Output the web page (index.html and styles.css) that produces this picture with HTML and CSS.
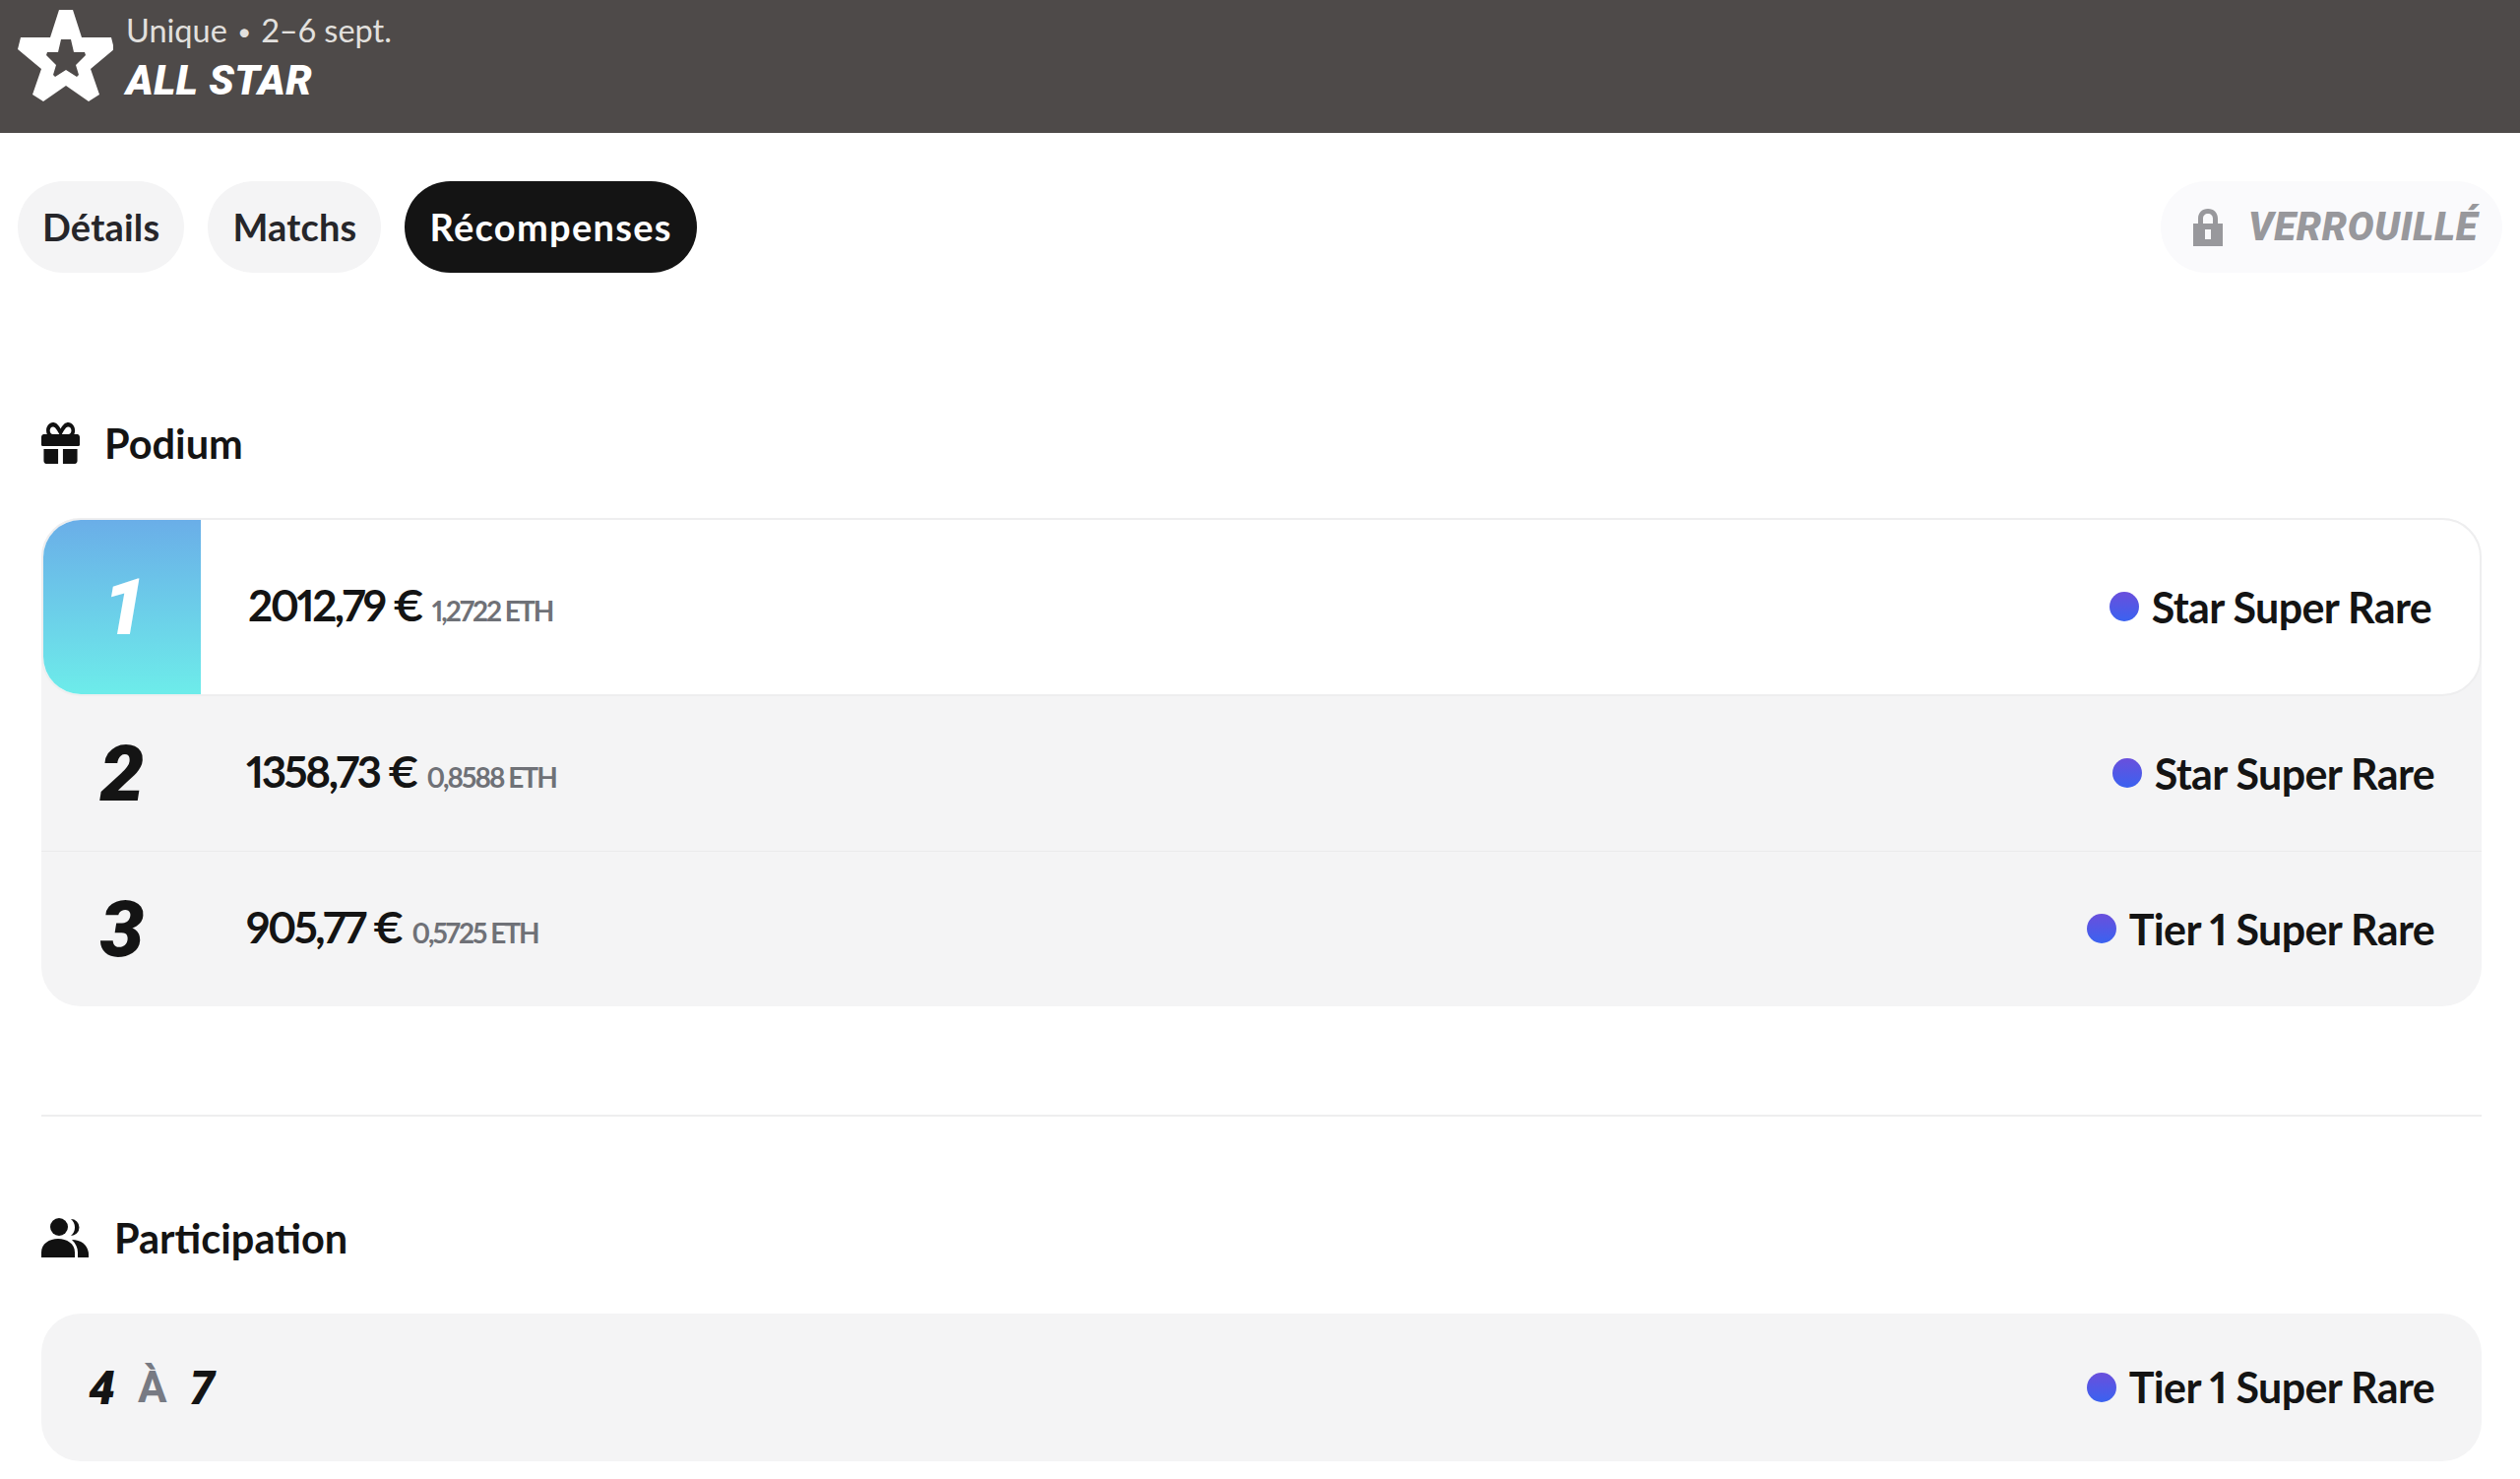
FILE: index.html
```html
<!DOCTYPE html>
<html lang="fr">
<head>
<meta charset="utf-8">
<title>All Star</title>
<link rel="stylesheet" href="styles.css">
</head>
<body>
<header class="top">
  <svg class="star" viewBox="18 10 97 93"><path fill-rule="evenodd" fill="#fff" d="M60 10H74L83 38H113L116 50L92 70L101 96L90 103L67 87L44 103L33 96L42 70L18 50L21 38H51ZM62 40L59 53H48L47 56L57 66L54 76L56 78L67 71L78 78L80 76L77 66L87 56L86 53H75L72 40Z"/></svg>
  <div class="top-text">
    <div class="sub">Unique <span class="bullet">•</span> 2–6 sept.</div>
    <div class="name">ALL STAR</div>
  </div>
</header>
<nav class="tabs">
  <a class="tab">Détails</a>
  <a class="tab">Matchs</a>
  <a class="tab active">Récompenses</a>
  <div class="locked">
    <svg class="lock" viewBox="0 0 30 38"><path fill="#98989c" fill-rule="evenodd" d="M5 15V10C5 4 9 0 15 0S25 4 25 10V15H30V38H0V15ZM10 15H20V10C20 7 18 5 15 5S10 7 10 10ZM12 21V31H18V21Z"/></svg>
    <span>VERROUILLÉ</span>
  </div>
</nav>
<main class="content">
  <section class="podium">
    <h2 class="heading">
      <svg class="ico-gift" viewBox="0 32 512 448" preserveAspectRatio="none"><path fill="#111" d="M32 448c0 17.700 14.300 32 32 32h160V320H32v128zm256 32h160c17.700 0 32-14.300 32-32V320H288v160zm192-320h-42.100c6.200-12.100 10.100-25.500 10.100-40 0-48.500-39.500-88-88-88-41.600 0-68.500 21.300-103 68.300-34.500-47-61.400-68.300-103-68.300-48.500 0-88 39.500-88 88 0 14.500 3.800 27.900 10.100 40H32c-17.700 0-32 14.300-32 32v80c0 8.800 7.200 16 16 16h480c8.800 0 16-7.200 16-16v-80c0-17.700-14.300-32-32-32zm-326.100 0c-22.100 0-40-17.900-40-40s17.900-40 40-40c19.900 0 34.600 3.300 86.100 80h-86.100zm206.100 0h-86.100c51.400-76.500 65.700-80 86.100-80 22.100 0 40 17.900 40 40s-17.900 40-40 40z"/></svg>
      Podium
    </h2>
    <div class="card">
      <div class="row first">
        <div class="rank grad">1</div>
        <div class="amount">2012,79 € <small>1,2722 ETH</small></div>
        <div class="tier first-tier"><i class="dot"></i>Star Super Rare</div>
      </div>
      <div class="row">
        <div class="rank">2</div>
        <div class="amount">1358,73 € <small>0,8588 ETH</small></div>
        <div class="tier"><i class="dot"></i>Star Super Rare</div>
      </div>
      <div class="row last">
        <div class="rank">3</div>
        <div class="amount">905,77 € <small>0,5725 ETH</small></div>
        <div class="tier"><i class="dot"></i>Tier 1 Super Rare</div>
      </div>
    </div>
  </section>
  <hr class="sep">
  <section>
    <h2 class="heading people">
      <svg class="ico-users" viewBox="0 0 48 40"><g fill="#111"><circle cx="18" cy="9" r="9"/><path d="M30 1a8.500 8.500 0 0 1 0 17a11 11 0 0 0 0-17Z"/><path d="M0 40V35C0 26 8 21 17 21S34 26 34 35V40Z"/><path d="M37 40V35C37 30 35 26 31 22C41 22 48 28 48 37V40Z"/></g></svg>
      Participation
    </h2>
    <div class="card range">
      <div class="span"><b>4</b><em>À</em><b>7</b></div>
      <div class="tier"><i class="dot"></i>Tier 1 Super Rare</div>
    </div>
  </section>
</main>
</body>
</html>
```
FILE: styles.css
```css
* { box-sizing: border-box; }
html, body { margin: 0; background: #fff; }
body { font-family: Lato, "Noto Sans", sans-serif; color: #141414; height: 1502px; overflow: hidden; font-variant-numeric: proportional-nums; }

.top { height: 135px; background: #4e4a49; display: flex; align-items: flex-start; gap: 13px; padding: 10px 0 0 18px; }
.star { width: 97px; height: 93px; flex: none; }
.top-text { color: #fff; }
.sub { font-size: 32.500px; line-height: 42px; color: #e2e0de; }
.bullet { font-size: 24px; margin: 0 2px; vertical-align: 2px; }
.name { font-family: Roboto, Lato, sans-serif; font-size: 42px; line-height: 52px; margin-top: 3px; font-weight: 900; font-style: italic; letter-spacing: 0.5px; }

.tabs { display: flex; align-items: center; gap: 24px; padding: 49px 18px 0; }
.tab { height: 93px; display: flex; align-items: center; padding: 0 25px 2px; border-radius: 47px; background: #f4f4f5; font-size: 38px; font-weight: 700; letter-spacing: 0.2px; color: #26262a; }
.tab.active { background: #141414; color: #fff; letter-spacing: 1.300px; }
.locked { margin-left: auto; height: 93px; width: 347px; display: flex; align-items: center; gap: 26px; padding-left: 33px; border-radius: 47px; background: #fafafc; color: #98989c; font-family: Roboto, Lato, sans-serif; font-size: 40px; font-weight: 900; font-style: italic; letter-spacing: 0.7px; }
.lock { width: 30px; height: 38px; flex: none; }

.content { padding: 0 39px 0 42px; }
.heading { margin: 0; height: 50px; display: flex; align-items: center; gap: 25px; font-size: 41.500px; font-weight: 700; color: #141414; }
.podium { padding-top: 148px; }
.ico-gift { width: 39px; height: 42px; }
.ico-users { width: 48px; height: 40px; }
.people { gap: 26px; margin-top: 98px; }

.card { background: #f4f4f5; border-radius: 40px; margin-top: 51px; }
.row { height: 157px; display: flex; align-items: center; padding-right: 48px; }
.row + .row { border-top: 1px solid #ebebec; }
.row.first { height: 181px; background: #fff; border: 2px solid #eeeeef; border-radius: 40px; padding-right: 49px; overflow: hidden; }
.row.first + .row { border-top: 0; }
.row.last { height: 158px; }
.rank { width: 162px; flex: none; align-self: stretch; display: flex; align-items: center; justify-content: center; padding-left: 2px; font-family: Roboto, Lato, sans-serif; font-size: 80px; font-weight: 900; font-style: italic; }
.rank.grad { width: 160px; padding-left: 4px; color: #fff; background: linear-gradient(#6aaee8, #6decea); }
.amount { margin-left: 46px; font-size: 44px; font-weight: 700; letter-spacing: -2.500px; color: #141414; padding-bottom: 6px; }
.row.first .amount { margin-left: 48px; }
.amount small { font-size: 28px; font-weight: 700; letter-spacing: -2px; color: #6f7177; margin-left: 2px; }
.tier { margin-left: auto; display: flex; align-items: center; gap: 13px; font-size: 43px; font-weight: 700; letter-spacing: -0.65px; color: #141414; padding-bottom: 1px; }
.dot { width: 30px; height: 30px; border-radius: 50%; background: linear-gradient(#6a4fdc, #3a62f0); flex: none; }

.sep { border: 0; height: 2px; background: #eeeeef; margin: 110px 0 0; }
.range { height: 150px; margin-top: 52px; display: flex; align-items: center; padding: 0 48px 0 48px; }
.span { display: flex; align-items: center; gap: 23px; font-family: Roboto, Lato, sans-serif; font-size: 48px; font-weight: 900; font-style: italic; }
.span b { font-weight: 900; }
.span em { color: #777a83; font-size: 44px; font-style: normal; font-weight: 700; }
```
